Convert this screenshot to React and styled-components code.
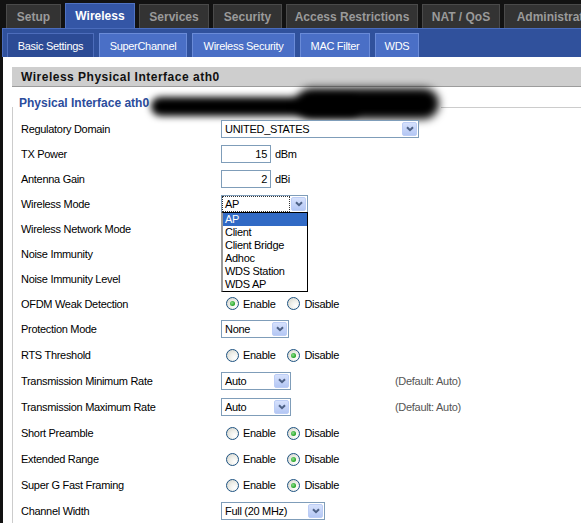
import styled, { createGlobalStyle } from "styled-components";

const GlobalStyle = createGlobalStyle`
  html, body {
    margin: 0;
    background: #121212;
    overflow: hidden;
  }
  body {
    font-family: "Liberation Sans", Arial, sans-serif;
    font-size: 11px;
    color: #000;
  }
`;

const Page = styled.div`
  width: 581px;
  height: 523px;
  overflow: hidden;
  display: flex;
  flex-direction: column;
`;

const MainTabs = styled.nav`
  display: flex;
  align-items: flex-end;
  gap: 4px;
  height: 28px;
  padding-left: 6px;
  white-space: nowrap;
  flex-shrink: 0;
`;

const MainTab = styled.div`
  flex-shrink: 0;
  box-sizing: border-box;
  width: ${(p) => p.$w}px;
  height: ${(p) => (p.$active ? 25 : 24)}px;
  display: flex;
  align-items: center;
  justify-content: center;
  background: ${(p) => (p.$active ? "#3456a6" : "#333333")};
  border: 1px solid ${(p) => (p.$active ? "#5073c2" : "#4a4a4a")};
  border-bottom: none;
  color: ${(p) => (p.$active ? "#ffffff" : "#9a9a9a")};
  font-size: 12px;
  font-weight: bold;
`;

const SubBar = styled.nav`
  flex-shrink: 0;
  margin-left: 2px;
  height: 29px;
  box-sizing: border-box;
  background: #30519c;
  border-top: 1px solid #4a6cbc;
  border-left: 1px solid #4a6cbc;
  padding: 4px 0 0 4px;
  display: flex;
  align-items: flex-end;
  gap: 5px;
`;

const SubTab = styled.div`
  box-sizing: border-box;
  width: ${(p) => p.$w}px;
  height: 24px;
  display: flex;
  align-items: center;
  justify-content: center;
  background: ${(p) => (p.$active ? "#2c4b95" : "#4a6fc6")};
  border: 1px solid ${(p) => (p.$active ? "#4d6dbb" : "#6a8bd8")};
  border-bottom: none;
  color: #fff;
  font-size: 11px;
  letter-spacing: -0.3px;
`;

const Content = styled.main`
  flex: 1;
  margin-left: 3px;
  background: #fff;
  padding: 10px 0 0 9px;
  overflow: hidden;
`;

const SectionHeader = styled.h2`
  margin: 0;
  height: 19px;
  box-sizing: content-box;
  background: #cecece;
  border-bottom: 1px solid #9c9c9c;
  padding-left: 9px;
  display: flex;
  align-items: center;
  font-size: 12px;
  font-weight: bold;
  letter-spacing: 0.5px;
  color: #111;
`;

const Fieldset = styled.fieldset`
  margin: 6px -80px 0 0;
  padding: 0;
  border: 1px solid #cccccc;
  border-right: none;
  border-bottom: none;
`;

const Legend = styled.legend`
  padding: 0 0 8px 6px;
  line-height: 20px;
  font-size: 12px;
  font-weight: bold;
  color: #2b4c9c;
  white-space: nowrap;
`;

const Redaction = styled.span`
  position: relative;
  display: inline-block;
  vertical-align: middle;
  width: 290px;
  height: 14px;
  margin-left: 2px;

  &::before {
    content: "";
    position: absolute;
    left: 0;
    top: 0;
    width: 210px;
    height: 19px;
    border-radius: 10px;
    background: #000;
    filter: blur(3.5px);
  }
  &::after {
    content: "";
    position: absolute;
    left: 145px;
    top: -9px;
    width: 143px;
    height: 31px;
    border-radius: 16px;
    background: #000;
    filter: blur(4px);
  }
`;

const Rows = styled.div`
  margin-top: -5px;
`;

const Row = styled.div`
  display: flex;
  align-items: center;
  height: ${(p) => p.$h || 25}px;
  padding-left: 8px;
  white-space: nowrap;
`;

const Label = styled.span`
  width: 200px;
  flex-shrink: 0;
  letter-spacing: -0.3px;
`;

const Value = styled.div`
  display: flex;
  align-items: center;
  letter-spacing: -0.3px;
`;

const SelectBox = styled.div`
  position: relative;
  box-sizing: border-box;
  width: ${(p) => p.$w}px;
  height: 18px;
  border: 1px solid #7f9db9;
  background: #fff;
  display: flex;
  align-items: center;
  padding-left: 1px;
`;

const SelectText = styled.span`
  flex: 1;
  height: 14px;
  line-height: 14px;
  padding-left: 2px;
  margin-right: 2px;
  outline: ${(p) => (p.$focus ? "1px dotted #333" : "none")};
`;

const ArrowBtn = styled.span`
  box-sizing: border-box;
  width: 15px;
  height: 14px;
  margin-right: 1px;
  border-radius: 2px;
  background: linear-gradient(#d6e1fc, #b4c7f4);
  border: 1px solid #bccdf5;
  display: flex;
  align-items: center;
  justify-content: center;
`;

const OptionList = styled.ul`
  position: absolute;
  left: -1px;
  top: 16px;
  width: 87px;
  box-sizing: border-box;
  margin: 0;
  padding: 0;
  list-style: none;
  background: #fff;
  border: 1px solid #000;
  border-left: 2px solid #9a9a9a;
  z-index: 2;
`;

const OptionItem = styled.li`
  height: 13px;
  line-height: 13px;
  padding-left: 2px;
  background: ${(p) => (p.$selected ? "#316ac5" : "transparent")};
  color: ${(p) => (p.$selected ? "#fff" : "#000")};
`;

const TextBox = styled.div`
  box-sizing: border-box;
  width: 50px;
  height: 18px;
  border: 1px solid #7f9db9;
  padding-right: 3px;
  text-align: right;
  line-height: 16px;
`;

const Unit = styled.span`
  margin-left: 4px;
`;

const RadioGroup = styled.div`
  display: flex;
  align-items: center;
  gap: 12px;
  padding-left: 5px;
`;

const RadioOption = styled.label`
  display: flex;
  align-items: center;
  gap: 4px;
`;

const RadioDot = styled.span`
  width: 13px;
  height: 13px;
  box-sizing: border-box;
  border-radius: 50%;
  border: 1px solid #1d5281;
  background: radial-gradient(circle at 70% 70%, #ffffff 0%, #efefe9 45%, #cfcfc7 100%);
  display: inline-flex;
  align-items: center;
  justify-content: center;

  &::after {
    content: "";
    width: 5px;
    height: 5px;
    border-radius: 50%;
    background: ${(p) =>
      p.$checked ? "radial-gradient(circle at 40% 40%, #8de08d, #21a121 70%)" : "transparent"};
  }
`;

const Note = styled.span`
  margin-left: 104px;
  color: #555;
`;

function Chevron() {
  return (
    <svg width="8" height="6" viewBox="0 0 8 6">
      <path d="M1 1.2 L4 4.2 L7 1.2" fill="none" stroke="#4d6185" strokeWidth="2" />
    </svg>
  );
}

function Select({ w, value, focus, children }) {
  return (
    <SelectBox $w={w}>
      <SelectText $focus={focus}>{value}</SelectText>
      <ArrowBtn>
        <Chevron />
      </ArrowBtn>
      {children}
    </SelectBox>
  );
}

function Radios({ on }) {
  return (
    <RadioGroup>
      <RadioOption>
        <RadioDot $checked={on} />
        Enable
      </RadioOption>
      <RadioOption>
        <RadioDot $checked={!on} />
        Disable
      </RadioOption>
    </RadioGroup>
  );
}

const mainTabs = [
  ["Setup", 55],
  ["Wireless", 70, true],
  ["Services", 70],
  ["Security", 69],
  ["Access Restrictions", 132],
  ["NAT / QoS", 78],
  ["Administration", 110],
];

const subTabs = [
  ["Basic Settings", 87, true],
  ["SuperChannel", 88],
  ["Wireless Security", 103],
  ["MAC Filter", 70],
  ["WDS", 44],
];

const modes = ["AP", "Client", "Client Bridge", "Adhoc", "WDS Station", "WDS AP"];

export default function App() {
  return (
    <Page>
      <GlobalStyle />
      <MainTabs>
        {mainTabs.map(([name, w, active]) => (
          <MainTab key={name} $w={w} $active={active}>
            {name}
          </MainTab>
        ))}
      </MainTabs>
      <SubBar>
        {subTabs.map(([name, w, active]) => (
          <SubTab key={name} $w={w} $active={active}>
            {name}
          </SubTab>
        ))}
      </SubBar>
      <Content>
        <SectionHeader>Wireless Physical Interface ath0</SectionHeader>
        <Fieldset>
          <Legend>
            Physical Interface ath0
            <Redaction />
          </Legend>
          <Rows>
            <Row>
              <Label>Regulatory Domain</Label>
              <Value>
                <Select w={198} value="UNITED_STATES" />
              </Value>
            </Row>
            <Row>
              <Label>TX Power</Label>
              <Value>
                <TextBox>15</TextBox>
                <Unit>dBm</Unit>
              </Value>
            </Row>
            <Row>
              <Label>Antenna Gain</Label>
              <Value>
                <TextBox>2</TextBox>
                <Unit>dBi</Unit>
              </Value>
            </Row>
            <Row>
              <Label>Wireless Mode</Label>
              <Value>
                <Select w={87} value="AP" focus>
                  <OptionList>
                    {modes.map((m, i) => (
                      <OptionItem key={m} $selected={i === 0}>
                        {m}
                      </OptionItem>
                    ))}
                  </OptionList>
                </Select>
              </Value>
            </Row>
            <Row>
              <Label>Wireless Network Mode</Label>
            </Row>
            <Row>
              <Label>Noise Immunity</Label>
            </Row>
            <Row>
              <Label>Noise Immunity Level</Label>
            </Row>
            <Row>
              <Label>OFDM Weak Detection</Label>
              <Value>
                <Radios on />
              </Value>
            </Row>
            <Row $h={26}>
              <Label>Protection Mode</Label>
              <Value>
                <Select w={68} value="None" />
              </Value>
            </Row>
            <Row $h={26}>
              <Label>RTS Threshold</Label>
              <Value>
                <Radios on={false} />
              </Value>
            </Row>
            <Row $h={26}>
              <Label>Transmission Minimum Rate</Label>
              <Value>
                <Select w={70} value="Auto" />
                <Note>(Default: Auto)</Note>
              </Value>
            </Row>
            <Row $h={26}>
              <Label>Transmission Maximum Rate</Label>
              <Value>
                <Select w={70} value="Auto" />
                <Note>(Default: Auto)</Note>
              </Value>
            </Row>
            <Row $h={26}>
              <Label>Short Preamble</Label>
              <Value>
                <Radios on={false} />
              </Value>
            </Row>
            <Row $h={26}>
              <Label>Extended Range</Label>
              <Value>
                <Radios on={false} />
              </Value>
            </Row>
            <Row $h={26}>
              <Label>Super G Fast Framing</Label>
              <Value>
                <Radios on={false} />
              </Value>
            </Row>
            <Row $h={26}>
              <Label>Channel Width</Label>
              <Value>
                <Select w={104} value="Full (20 MHz)" />
              </Value>
            </Row>
          </Rows>
        </Fieldset>
      </Content>
    </Page>
  );
}
